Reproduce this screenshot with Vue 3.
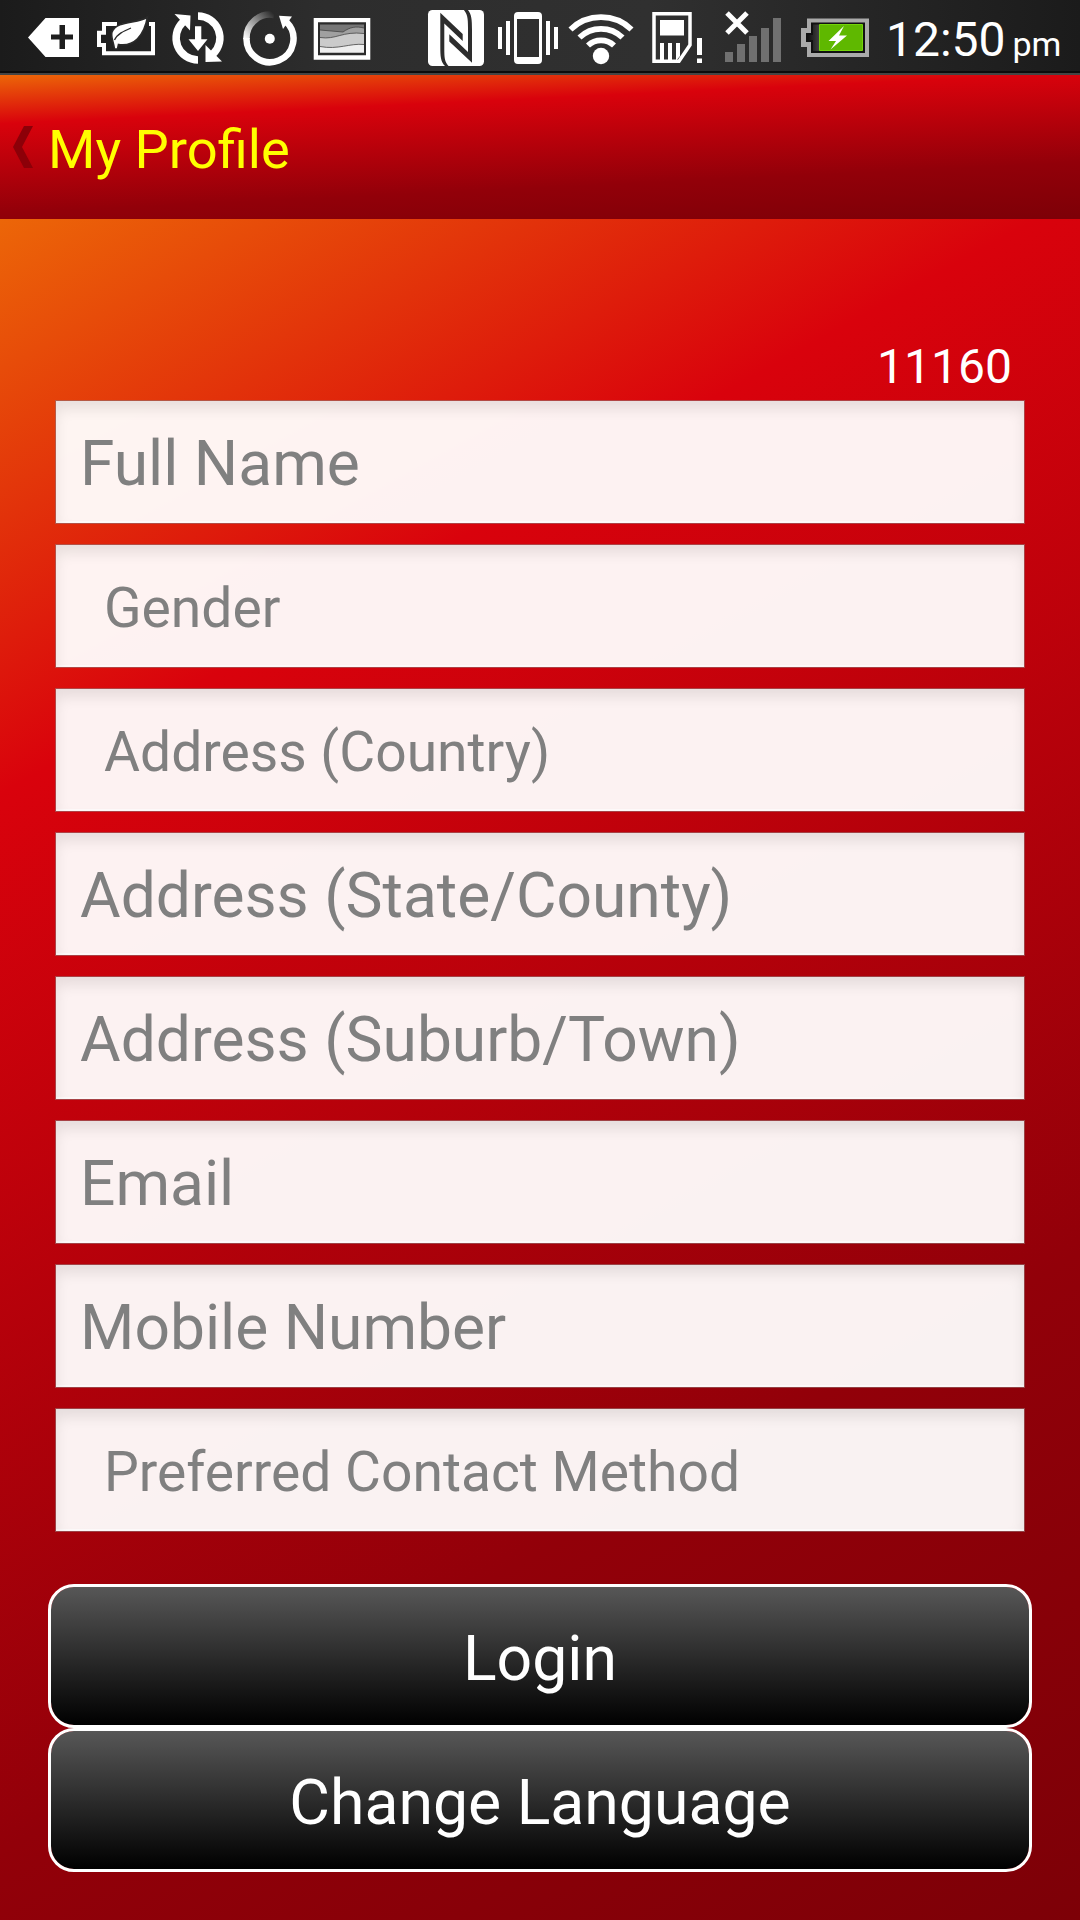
<script setup>
const fields = [
  { label: 'Full Name', picker: false },
  { label: 'Gender', picker: true },
  { label: 'Address (Country)', picker: true },
  { label: 'Address (State/County)', picker: false },
  { label: 'Address (Suburb/Town)', picker: false },
  { label: 'Email', picker: false },
  { label: 'Mobile Number', picker: false },
  { label: 'Preferred Contact Method', picker: true },
]
const actions = ['Login', 'Change Language']
</script>

<template>
  <div class="screen">
    <div class="status">
      <div class="group">
        <svg width="64" height="71" viewBox="24 0 64 71">
          <path fill="#fff" fill-rule="evenodd" d="M28 37.5 45.5 18H79V57H45.5ZM59.5 25V34.5H51V39.5H59.5V49H65V39.5H73V34.5H65V25Z" />
        </svg>
        <svg width="76" height="71" viewBox="88 0 76 71">
          <path fill="none" stroke="#fff" stroke-width="4" d="M117 24H104V32.7H99V45H104V53.2H153V24H149" />
          <path fill="#fff" stroke="#2a2a2a" stroke-width="1.6" d="M147.500 17C138 24 117 20 112 32C110.500 37 113.500 41 114.500 49H117.500L118.500 44.500C134 47 144 36 147.500 17Z" />
          <path fill="none" stroke="#2a2a2a" stroke-width="1.3" d="M114.500 40C117 34 124 31 131 28" />
        </svg>
        <svg width="70" height="71" viewBox="164 0 70 71">
          <g fill="none" stroke="#fff" stroke-width="7.500">
            <path d="M198 16A22 22 0 0 1 213 54" />
            <path d="M198 60A22 22 0 0 1 183 22" />
          </g>
          <path fill="#fff" d="M174.500 14 190.500 15.500 190 30.500ZM205.500 45V62L222 61.500ZM195 26.300H201.300V39.300H207.500L198 51 188.500 39.300H195Z" />
        </svg>
        <svg width="70" height="71" viewBox="234 0 70 71">
          <defs>
            <linearGradient id="fade" x1="246" y1="40" x2="274" y2="14" gradientUnits="userSpaceOnUse">
              <stop offset="0" stop-color="#fff" /><stop offset="1" stop-color="#fff" stop-opacity="0" />
            </linearGradient>
          </defs>
          <path fill="none" stroke="#fff" stroke-width="6.500" d="M286.500 22A23.500 23.500 0 1 1 246.500 38" />
          <path fill="none" stroke="url(#fade)" stroke-width="6.500" d="M246.500 39A23.500 23.500 0 0 1 274 15" />
          <circle cx="269.800" cy="38.700" r="5" fill="#fff" />
          <path fill="#fff" d="M279 15.800 292 16.500 283 29Z" />
        </svg>
        <svg width="76" height="71" viewBox="304 0 76 71">
          <path fill="#fff" d="M313.700 18H370.300V59.700H313.700Z" />
          <path fill="#2b2b2b" d="M318 22.300H366V55.300H318Z" />
          <path fill="#777" d="M320 24.500H364V34H320Z" />
          <path fill="#a0a0a0" d="M320 30 343 32C350 27 356 26 364 28V40H320Z" />
          <path fill="#cbcbcb" d="M320 37.500C336 40 342 31 364 33.500V50H320Z" />
          <path fill="#eee" d="M320 46.500C338 50 350 43 364 44.500V52.800H320Z" />
          <path fill="none" stroke="#444" stroke-width=".8" d="M320 30 343 32C350 27 356 26 364 28M320 37.500C336 40 342 31 364 33.500M320 46.500C338 50 350 43 364 44.500" />
        </svg>
      </div>
      <div class="group">
        <svg width="72" height="71" viewBox="420 0 72 71">
          <rect x="428" y="10" width="56" height="56" rx="4.500" fill="#fff" />
          <path fill="#2d2d2d" d="M440.300 12.700 462.700 34V41L444.300 23.500V48C444.300 58 444.500 62 449 66.500H445.500C440.500 62 440.300 56 440.300 46Z" />
          <path fill="#2d2d2d" d="M472 62.700 449.300 41.500V34.300L468 52V28C468 18 467.500 14 463.500 9.500H467.500C471.700 14 472 20 472 30Z" />
        </svg>
        <svg width="72" height="71" viewBox="492 0 72 71" fill="#fff">
          <path fill-rule="evenodd" d="M518 12H538Q542 12 542 16V60Q542 64 538 64H518Q514 64 514 60V16Q514 12 518 12ZM517 19V57H539V19Z" />
          <path d="M498 27H502V49H498ZM506 21H510V55H506ZM546 21H550V55H546ZM554 27H558V49H554Z" />
        </svg>
        <svg width="76" height="71" viewBox="564 0 76 71">
          <g fill="none" stroke="#fff" stroke-width="5.800">
            <path d="M570.500 29.500A44 44 0 0 1 631.500 29.500" />
            <path d="M579.500 37.500A31 31 0 0 1 622.500 37.500" />
            <path d="M588 45.500A19 19 0 0 1 614 45.500" />
          </g>
          <circle cx="601" cy="56" r="8.200" fill="#fff" />
        </svg>
        <svg width="72" height="71" viewBox="640 0 72 71">
          <path fill="none" stroke="#fff" stroke-width="3.500" d="M654 13.700H690V45L679 61.300H654Z" />
          <path fill="#fff" d="M660 20H684V35.500H660ZM660 43H664V61H660ZM668 43H672V61H668ZM676 43H680V56L676 61ZM697 38H702V55H697ZM697 58.500H702V63H697Z" />
        </svg>
        <svg width="78" height="71" viewBox="712 0 78 71">
          <path fill="#707070" d="M725 52H733V62H725ZM737 44H745V62H737ZM749 36H757V62H749ZM761 28H769V62H761ZM773 18H781V62H773Z" />
          <path stroke="#fff" stroke-width="5" d="M727 13 747 33M747 13 727 33" />
        </svg>
        <svg width="90" height="71" viewBox="790 0 90 71">
          <defs>
            <linearGradient id="cell"><stop stop-color="#111" /><stop offset="1" stop-color="#444" /></linearGradient>
          </defs>
          <path fill="#aaa" d="M807 18.500H869V57H807V47H801V28H807Z" />
          <path fill="#111" d="M811 22.500H865V53H811V42H806V33H811Z" />
          <path fill="url(#cell)" d="M813 24.500H820V51H813V40H808V35H813Z" />
          <path fill="#5fb800" stroke="#74d40a" stroke-width="1" d="M819.500 24.500H862.500V50.500H819.500Z" />
          <path fill="#fff" d="M844 26 828.500 41H836L830.500 49.500 847 35.500H839Z" />
        </svg>
        <div class="clock"><span>12:50</span><span class="ampm">pm</span></div>
      </div>
    </div>

    <header class="bar">
      <svg class="back" width="20" height="42" viewBox="0 0 20 42"><path fill="#8c0008" d="M11 0H20L9 21 20 42H11L0 21Z" /></svg>
      <h1>My Profile</h1>
    </header>

    <main class="content">
      <div class="code">11160</div>
      <form class="form">
        <div v-for="f in fields" :key="f.label" class="field" :class="{ picker: f.picker }">
          <span>{{ f.label }}</span>
        </div>
      </form>
      <div class="actions">
        <button v-for="a in actions" :key="a" type="button"><span>{{ a }}</span></button>
      </div>
    </main>
  </div>
</template>

<style>
body { margin: 0; }
</style>

<style scoped>
.screen {
  width: 1080px;
  height: 1920px;
  display: flex;
  flex-direction: column;
  overflow: hidden;
  font-family: Roboto, "Liberation Sans", sans-serif;
}
.status {
  box-sizing: border-box;
  height: 75px;
  flex: none;
  display: flex;
  justify-content: space-between;
  padding-left: 24px;
  background:
    linear-gradient(#0c0c0c, #0c0c0c) 0 71px / 100% 2px no-repeat,
    linear-gradient(#444, #444) 0 73px / 100% 2px no-repeat,
    linear-gradient(90deg, #1b1b1b, #2d2d2d 30%, #303030 60%, #1b1b1b);
}
.group { display: flex; height: 71px; }
.group svg { display: block; flex: none; }
.clock {
  width: 200px;
  box-sizing: border-box;
  padding-left: 6px;
  display: flex;
  align-items: baseline;
  color: #fff;
  font-size: 48px;
  line-height: 79px;
  white-space: nowrap;
}
.ampm { font-size: 34px; margin-left: 7px; }
.bar {
  height: 144px;
  flex: none;
  display: flex;
  align-items: center;
  padding-left: 13px;
  background: linear-gradient(177.300deg, #ec6608, #d9020c 25%, #920009 71%, #7d0007);
}
.back { display: block; }
h1 {
  margin: 5px 0 0 15px;
  font-size: 54.300px;
  font-weight: 400;
  line-height: 64px;
  color: #ff0;
}
.content {
  flex: 1;
  display: flex;
  flex-direction: column;
  padding: 118px 48px 0;
  background: linear-gradient(151deg, #ec6608, #d9020c 25%, #920009 71%, #7d0007);
}
.code {
  height: 63px;
  line-height: 59px;
  padding-right: 20px;
  text-align: right;
  color: #fff;
  font-size: 48px;
}
.form {
  display: flex;
  flex-direction: column;
  gap: 20px;
  margin: 0 7px;
}
.field {
  box-sizing: border-box;
  height: 124px;
  display: flex;
  align-items: center;
  padding: 3px 0 0 24px;
  border: 1px solid rgba(150, 110, 110, .6);
  background: rgba(255, 255, 255, .95);
  background-clip: padding-box;
  box-shadow: inset 0 8px 14px rgba(0, 0, 0, .09), inset 0 -2px 0 rgba(255, 255, 255, .6);
  color: #808080;
  font-size: 62.300px;
}
.picker { padding: 3px 0 0 48px; font-size: 55.200px; }
.actions {
  margin-top: 52px;
  display: flex;
  flex-direction: column;
}
button {
  box-sizing: border-box;
  height: 144px;
  border: 3px solid #fff;
  border-radius: 26px;
  padding: 4px 0 0;
  background: linear-gradient(#575757, #000) padding-box;
  color: #fff;
  font-family: inherit;
  font-size: 62.500px;
}
</style>
